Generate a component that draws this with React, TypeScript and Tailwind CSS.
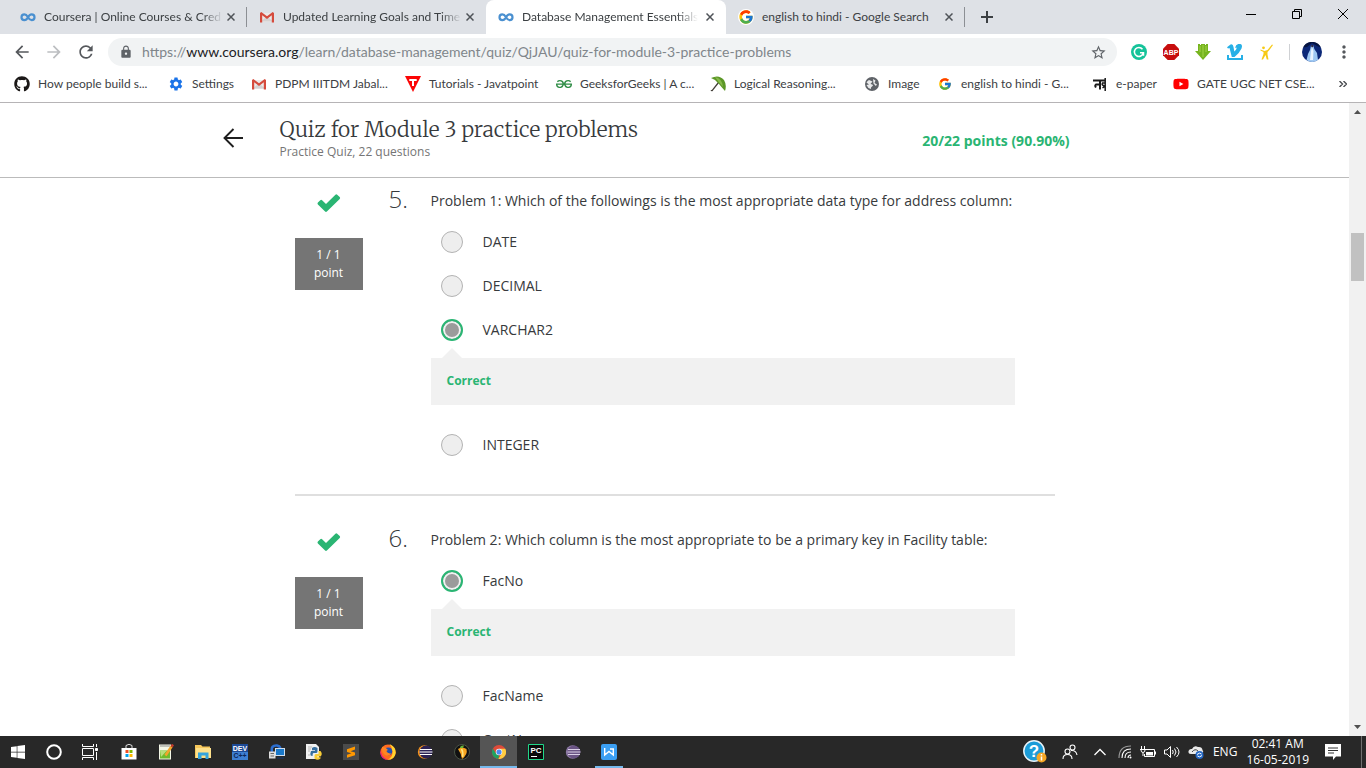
import { useState, type ReactNode } from "react";
import { FaGithub, FaWindows, FaYoutube } from "react-icons/fa";
import { FcGoogle } from "react-icons/fc";
import {
  MdArrowBack,
  MdArrowForward,
  MdLock,
  MdMoreVert,
  MdRefresh,
  MdSettings,
  MdStarBorder,
} from "react-icons/md";
import { SiGeeksforgeeks } from "react-icons/si";

/* ---------- Site icons ---------- */

function CourseraIcon() {
  return (
    <svg viewBox="0 0 16 16" className="size-4">
      <path
        d="M8 8.300C6.800 6.300 5.800 5.400 4.400 5.400a2.900 2.900 0 0 0 0 5.800C6.500 11.200 7.400 9.500 8 8.300S9.500 5.400 11.600 5.400a2.900 2.900 0 0 1 0 5.800C10.200 11.200 9.200 10.300 8 8.300"
        fill="none"
        stroke="#4a90d0"
        strokeWidth="2.200"
      />
    </svg>
  );
}

function GmailIcon() {
  return (
    <svg viewBox="0 0 16 16" className="size-4">
      <path d="M2 4h12v9H2z" fill="#eceaea" />
      <path d="M2 12.500 6.500 8.500h3L14 12.500z" fill="#d5d2d2" />
      <path d="M1 13.500V4l1.300-1L8 7.300 13.700 3 15 4v9.500h-2.200V6.300L8 10 3.200 6.300v7.200z" fill="#d54b3d" />
    </svg>
  );
}

function JavatpointIcon() {
  return (
    <svg viewBox="0 0 16 16" className="size-4">
      <path d="M0 0h16L8 16z" fill="#fb0505" />
      <path d="M4.300 3h7.400v2H9v5H7V5H4.300z" fill="#fff" />
    </svg>
  );
}

function UmbrellaIcon() {
  return (
    <svg viewBox="0 0 16 16" className="size-4">
      <path d="M8.500 6.500 2.500 14.200q-.8.900-1.500 0" fill="none" stroke="#44403a" strokeWidth="1.300" />
      <path d="M1 2Q9-1.800 14 4q3 5 1 11l-3.500-4L9 8 5 4z" fill="#5b9726" />
      <path d="M5 1q7 1 8 10l-4-4.500z" fill="#87b94a" />
    </svg>
  );
}

function GlobeIcon() {
  return (
    <svg viewBox="0 0 16 16" className="size-4">
      <circle cx="8" cy="8" r="7" fill="#5f6368" />
      <path
        d="M2.500 6.500Q3.500 4.500 5 4L8.500 5.500 6.500 8Q9 8 9 9.500L7 11.500V13Q3.500 12 2.500 9L5 8.500zM9 3l2.500 1.500L10.500 7l2.500 1.500-1.200 1.500L9.500 7.500z"
        fill="#e9eaeb"
      />
    </svg>
  );
}

function NaiIcon() {
  return (
    <svg viewBox="0 0 16 16" className="size-4">
      <path
        d="M1 4.500h12M8 4.500v9M7.500 8.500H4Q2.500 9.500 4 11.500"
        fill="none"
        stroke="#191919"
        strokeWidth="2"
      />
      <path d="M13.200 2v13M12.500 7H10.500q-1 2 1 2.500t-1 2.500" fill="none" stroke="#191919" strokeWidth="1.500" />
    </svg>
  );
}

/* ---------- Extension icons ---------- */

function GrammarlyIcon() {
  return (
    <svg viewBox="0 0 16 16" className="size-4">
      <circle cx="8" cy="8" r="8" fill="#15c39a" />
      <path d="M11.500 5.200A4.500 4.500 0 1 0 12.300 9M9 8.800h3.500v3" fill="none" stroke="#fff" strokeWidth="1.500" />
    </svg>
  );
}

function AdblockIcon() {
  return (
    <svg viewBox="0 0 16 16" className="size-4">
      <path d="M4.700 0h6.600L16 4.700v6.600L11.300 16H4.700L0 11.300V4.700z" fill="#c70d0d" />
      <text x="8" y="10.500" textAnchor="middle" fontSize="7" fontWeight="700" fill="#fff" fontFamily="Liberation Sans, sans-serif">
        ABP
      </text>
    </svg>
  );
}

function DownloadIcon() {
  return (
    <svg viewBox="0 0 16 16" className="size-4">
      <path d="M3 0h2v1h1V0h4v1h1V0h2v7h3l-8 9-8-9h3z" fill="#76b41f" />
      <path d="M5 2v6M8 1v12M11 2v6" stroke="#a1d447" strokeWidth="1" />
    </svg>
  );
}

function VimeoIcon() {
  return (
    <svg viewBox="0 0 16 16" className="size-4">
      <path d="M0 11h2v3h12v-3h2v5H0z" fill="#27b0e6" />
      <path d="M0 3.200 3.500.5Q6-.5 6.500 3l.8 4.500Q10.500 4.500 9.200 3.500L8 4Q9-.5 13-.1q3 .4 1.500 4.500Q12.500 9 7.500 13H4.800L2.500 4 1 4.500z" fill="#27b0e6" />
    </svg>
  );
}

function ArcherIcon() {
  return (
    <svg viewBox="0 0 16 16" className="size-4">
      <circle cx="4.500" cy="3.800" r="1.400" fill="#f7ca15" />
      <path d="M1.500 5.500 5.500 7l3-1L13 .5 14 1 10 6.500 8.500 8v2.500l1 5H7.800L6.500 11l-2.500 4.500H2.500L4.500 10V8L1.500 6.500z" fill="#f7ca15" />
    </svg>
  );
}

function Avatar() {
  return (
    <svg viewBox="0 0 20 20" className="size-5">
      <circle cx="10" cy="10" r="10" fill="#0c2878" />
      <path d="M1 5.500A10 10 0 0 1 19 5.500L15 4 10 1 5 5z" fill="#061440" />
      <path d="M9 3.500h2.500l.8 3.500 2.700 4 1 7Q10 22 4.500 18L6 12l2-4z" fill="#9dc7f2" />
      <path d="M10 5l1.500 4-.5 9H8l1-9z" fill="#e9f4ff" />
      <circle cx="10.300" cy="4" r="1.200" fill="#2c2743" />
    </svg>
  );
}

/* ---------- Browser chrome ---------- */

type TabInfo = { title: string; icon: ReactNode; active?: boolean; separator?: boolean; fades?: boolean };

const tabs: TabInfo[] = [
  { title: "Coursera | Online Courses & Cred", icon: <CourseraIcon />, separator: true, fades: true },
  { title: "Updated Learning Goals and Time", icon: <GmailIcon />, fades: true },
  { title: "Database Management Essentials", icon: <CourseraIcon />, active: true, fades: true },
  { title: "english to hindi - Google Search", icon: <FcGoogle className="size-4 rounded-full bg-white" />, separator: true },
];

function CloseGlyph() {
  return (
    <svg viewBox="0 0 8 8" className="size-2">
      <path d="M.5.500l7 7M7.500.500l-7 7" stroke="#4f5358" strokeWidth="1.500" />
    </svg>
  );
}

function Tab({ title, icon, active, separator, fades }: TabInfo) {
  return (
    <div className={active ? "flex h-[34px] w-60 items-center rounded-t-lg bg-white px-3" : "flex h-[34px] w-[239px] items-center pl-3"}>
      {icon}
      <span
        className={
          "ml-2 min-w-0 flex-1 overflow-hidden text-[12px] whitespace-nowrap text-[#3c4043] " +
          (fades ? "[mask-image:linear-gradient(to_right,#000_88%,transparent)]" : "")
        }
      >
        {title}
      </span>
      <button aria-label={`Close ${title}`} className={active ? "ml-2" : "mr-[11px] ml-1"}>
        <CloseGlyph />
      </button>
      {!active && <span className={separator ? "h-5 w-px bg-[#8c8f94]" : "h-5 w-px"} />}
    </div>
  );
}

function TabStrip() {
  return (
    <div className="flex h-[34px] shrink-0 items-center bg-[#dee1e6] pl-2">
      {tabs.map((tab) => (
        <Tab key={tab.title} {...tab} />
      ))}
      <button aria-label="New tab" className="ml-4">
        <svg viewBox="0 0 12 12" className="size-3">
          <path d="M6 0v12M0 6h12" stroke="#3c4043" strokeWidth="2" />
        </svg>
      </button>
      <div className="ml-auto flex items-center gap-9 self-start pt-2 pr-[18px]">
        <button aria-label="Minimize">
          <svg viewBox="0 0 10 12" className="h-3 w-[10px]">
            <path d="M0 6.500h10" stroke="#000" />
          </svg>
        </button>
        <button aria-label="Restore">
          <svg viewBox="0 0 10 12" className="h-3 w-[10px]">
            <path d="M.5 3.500h7v7h-7zM2.500 3V1.500h7v7H8" fill="none" stroke="#000" />
          </svg>
        </button>
        <button aria-label="Close window">
          <svg viewBox="0 0 10 12" className="h-3 w-[10px]">
            <path d="M0 1l10 10M10 1 0 11" stroke="#000" />
          </svg>
        </button>
      </div>
    </div>
  );
}

function AddressBar() {
  return (
    <div className="flex h-9 shrink-0 items-center bg-white pr-3 pl-3">
      <button aria-label="Back">
        <MdArrowBack className="size-5 text-[#55585c]" />
      </button>
      <button aria-label="Forward" className="ml-3">
        <MdArrowForward className="size-5 text-[#bcbec1]" />
      </button>
      <button aria-label="Reload" className="ml-3">
        <MdRefresh className="size-5 text-[#55585c]" />
      </button>
      <div className="ml-3 flex h-7 flex-1 items-center rounded-full bg-[#f1f3f4] pr-[10px] pl-[11px]">
        <MdLock className="size-[14px] text-[#5f6368]" />
        <span className="ml-[9px] flex-1 text-[14px] leading-5 whitespace-nowrap text-[#80868b]">
          https://<span className="text-[#202124]">www.coursera.org</span>
          /learn/database-management/quiz/QjJAU/quiz-for-module-3-practice-problems
        </span>
        <button aria-label="Bookmark this page">
          <MdStarBorder className="size-[17px] text-[#5f6368]" />
        </button>
      </div>
      <div className="ml-[14px] flex items-center gap-4">
        <button aria-label="Grammarly"><GrammarlyIcon /></button>
        <button aria-label="Adblock Plus"><AdblockIcon /></button>
        <button aria-label="Downloader"><DownloadIcon /></button>
        <button aria-label="Video downloader"><VimeoIcon /></button>
        <button aria-label="Archer"><ArcherIcon /></button>
      </div>
      <span className="mr-3 ml-[14px] h-4 w-px bg-[#cfd1d4]" />
      <button aria-label="Profile"><Avatar /></button>
      <button aria-label="Menu" className="ml-3">
        <MdMoreVert className="size-5 text-[#55585c]" />
      </button>
    </div>
  );
}

const bookmarks: { label: string; icon: ReactNode }[] = [
  { label: "How people build s...", icon: <FaGithub className="size-4 text-[#1b1817]" /> },
  { label: "Settings", icon: <MdSettings className="size-4 text-[#1a73e8]" /> },
  { label: "PDPM IIITDM Jabal...", icon: <GmailIcon /> },
  { label: "Tutorials - Javatpoint", icon: <JavatpointIcon /> },
  { label: "GeeksforGeeks | A c...", icon: <SiGeeksforgeeks className="size-4 text-[#2f8d46]" /> },
  { label: "Logical Reasoning...", icon: <UmbrellaIcon /> },
  { label: "Image", icon: <GlobeIcon /> },
  { label: "english to hindi - G...", icon: <FcGoogle className="size-[14px]" /> },
  { label: "e-paper", icon: <NaiIcon /> },
  { label: "GATE UGC NET CSE...", icon: <FaYoutube className="size-4 text-[#f00]" /> },
];

function BookmarksBar() {
  return (
    <nav className="flex h-[33px] shrink-0 items-center border-b border-[#b6b4b6] bg-white pb-1 pl-[14px]">
      <div className="grid grid-cols-[154px_83px_154px_151px_154px_154px_73px_155px_81px_150px]">
        {bookmarks.map(({ label, icon }) => (
          <a key={label} href="#" className="flex items-center gap-2 text-[12px] whitespace-nowrap text-[#3c4043]">
            <span className="flex w-4 shrink-0 justify-center">{icon}</span>
            {label}
          </a>
        ))}
      </div>
      <button aria-label="More bookmarks" className="mr-[19px] ml-auto">
        <svg viewBox="0 0 8 6" className="h-[6px] w-2">
          <path d="M.5 0l3 3-3 3M4.500 0l3 3-3 3" fill="none" stroke="#4a4d51" strokeWidth="1.400" />
        </svg>
      </button>
    </nav>
  );
}

/* ---------- Quiz page ---------- */

function QuizHeader() {
  return (
    <header className="h-[75px] shrink-0 border-b border-[#bbb] bg-white">
      <div className="mx-auto flex h-full w-full max-w-[904px] items-center pb-1">
        <a href="#" aria-label="Back to course">
          <svg viewBox="0 0 20 20" className="size-5">
            <path d="M10.500 1 1.500 10l9 9M1.500 10H20" fill="none" stroke="#1f1f1f" strokeWidth="1.900" />
          </svg>
        </a>
        <div className="ml-[37px] flex-1">
          <h1 className="font-['Merriweather','Liberation_Serif',serif] text-[21px] leading-7 font-light text-[#373a3c]">
            Quiz for Module 3 practice problems
          </h1>
          <p className="text-[12px] leading-4 text-[#757575]">Practice Quiz, 22 questions</p>
        </div>
        <p className="mt-[6px] mr-[57px] text-[14px] leading-5 font-bold text-[#2ab573]">20/22 points (90.90%)</p>
      </div>
    </header>
  );
}

type Question = { number: number; text: string; options: string[]; answer: string };

const questions: Question[] = [
  {
    number: 5,
    text: "Problem 1: Which of the followings is the most appropriate data type for address column:",
    options: ["DATE", "DECIMAL", "VARCHAR2", "INTEGER"],
    answer: "VARCHAR2",
  },
  {
    number: 6,
    text: "Problem 2: Which column is the most appropriate to be a primary key in Facility table:",
    options: ["FacNo", "FacName", "CustNo"],
    answer: "FacNo",
  },
];

function CheckMark() {
  return (
    <svg viewBox="0 0 24 24" className="size-6">
      <path
        d="M.9 11.600 3.300 9.200q.9-.9 1.800 0L9 13 18.400 3.700q.9-.9 1.800 0l2.500 2.400q.9.900 0 1.800L9.900 20.600q-.9.900-1.800 0L.9 13.400q-.9-.9 0-1.800z"
        fill="#2ab573"
      />
    </svg>
  );
}

function Feedback() {
  return (
    <div className="mt-[6px] mb-[18px] flex h-[47px] flex-col">
      <svg viewBox="0 0 20 10" className="-mt-[10px] ml-[11px] h-[10px] w-5 shrink-0">
        <path d="M0 10 10 0l10 10z" fill="#f1f1f1" />
      </svg>
      <p className="h-[47px] shrink-0 bg-[#f1f1f1] px-4 pt-[14px] text-[12px] leading-[18px] font-bold text-[#2ab573]">
        Correct
      </p>
    </div>
  );
}

function QuestionItem({ number, text, options, answer }: Question) {
  const [selected, setSelected] = useState(answer);
  return (
    <article className="mx-auto flex w-full max-w-[760px] border-b-2 border-[#dfdfdf] pb-[27px] not-first:pt-[34px]">
      <div className="flex w-[68px] flex-col items-center">
        <CheckMark />
        <p className="mt-[23px] flex h-[52px] w-full items-center justify-center bg-[#757575] text-center text-[12px] leading-[18px] text-white">
          1 / 1
          <br />
          point
        </p>
      </div>
      <span className="ml-[26px] w-[42px] text-[24px] leading-4 font-light text-[#373a3c]">{number}.</span>
      <fieldset className="w-[584px]">
        <legend className="mb-[9px] text-[14px] leading-5 whitespace-nowrap text-[#373a3c]">{text}</legend>
        {options.map((option) => (
          <div key={option}>
            <label className="flex h-11 items-center gap-5 pl-[10px] text-[14px] leading-5 text-[#373a3c]">
              <input
                type="radio"
                name={`question-${number}`}
                checked={selected === option}
                onChange={() => setSelected(option)}
                className="size-[22px] appearance-none rounded-full border border-[#b3b3b3] bg-[#eee] checked:border-2 checked:border-[#2ab573] checked:bg-[#9b9b9b] checked:shadow-[inset_0_0_0_2px_#f1f1f1]"
              />
              {option}
            </label>
            {option === answer && <Feedback />}
          </div>
        ))}
      </fieldset>
    </article>
  );
}

function ScrollRail() {
  return (
    <div className="flex w-[17px] shrink-0 flex-col items-center bg-[#f1f1f1] py-[7px]">
      <svg viewBox="0 0 7 4" className="h-1 w-[7px] shrink-0">
        <path d="M0 4 3.500 0 7 4z" fill="#505050" />
      </svg>
      <div className="mt-[119px] h-12 w-[13px] shrink-0 bg-[#c1c1c1]" />
      <svg viewBox="0 0 7 4" className="mt-auto h-1 w-[7px] shrink-0">
        <path d="M0 0 3.500 4 7 0z" fill="#505050" />
      </svg>
    </div>
  );
}

/* ---------- Taskbar ---------- */

function StoreIcon() {
  return (
    <svg viewBox="0 0 16 16" className="size-4">
      <path d="M5 4V1.500Q8-1 11 1.500V4" fill="none" stroke="#ddd" />
      <path d="M.5 4h15v11.500H.5z" fill="#fff" />
      <path d="M4.500 6H7.500v3h-3z" fill="#f25022" />
      <path d="M8.500 6h3v3h-3z" fill="#7fba00" />
      <path d="M4.500 10h3v3h-3z" fill="#00a4ef" />
      <path d="M8.500 10h3v3h-3z" fill="#ffb900" />
    </svg>
  );
}

function NotepadIcon() {
  return (
    <svg viewBox="0 0 16 16" className="size-4">
      <path d="M1 .5h12V15.500H1z" fill="#f4f7e8" />
      <path d="M2 6.500h10V14.500H2z" fill="#6fba2c" />
      <path d="M2 6.500h7L3 13z" fill="#b8de7e" />
      <path d="M3 .5v2.500M5 .5v2.500M7 .5v2.500M9 .5v2.500M11 .5v2.500" stroke="#8b8b8b" />
      <path d="M13.500 2.500 7.500 11.500" stroke="#f3a52d" strokeWidth="2.600" />
      <path d="m15 .5-1.500 2.200" stroke="#c33c2c" strokeWidth="2.600" />
    </svg>
  );
}

function FolderIcon() {
  return (
    <svg viewBox="0 0 16 16" className="size-4">
      <path d="M0 1h6l1.500 1.500H15V14H0z" fill="#f6c75b" />
      <path d="M1 4h15v10H1z" fill="#fde08b" />
      <path d="M3 15V8.500h10.500V15H10.500v-3.500h-4V15z" fill="#35a4dd" />
    </svg>
  );
}

function DevCppIcon() {
  return (
    <svg viewBox="0 0 16 16" className="size-4">
      <path d="M0 0h16v16H0z" fill="#1d4a96" />
      <path d="M0 8h16v8H0z" fill="#3d7fd2" />
      <text x="8" y="7" textAnchor="middle" fontSize="7" fontWeight="700" fill="#fff" fontFamily="Liberation Sans, sans-serif">DEV</text>
      <text x="8" y="14" textAnchor="middle" fontSize="7" fontWeight="700" fill="#0e2757" fontFamily="Liberation Sans, sans-serif">C++</text>
    </svg>
  );
}

function RemoteIcon() {
  return (
    <svg viewBox="0 0 16 16" className="size-4">
      <path d="M3 8Q1.500 1 8 1.500Q10.500 2 11.500 4" fill="none" stroke="#2c6fd1" strokeWidth="2.500" />
      <path d="M6 4h10v8H6z" fill="#cfdded" />
      <path d="M7 5h8v6H7z" fill="#1978c9" />
      <path d="M8 13h7v2H8z" fill="#1c2f4b" />
      <path d="M0 7.500h6.500v7H0z" fill="#dedede" />
      <path d="M1.500 9.500h3.500M1.500 12h3.500" stroke="#676767" />
    </svg>
  );
}

function PythonIcon() {
  return (
    <svg viewBox="0 0 16 16" className="size-4">
      <path d="M0 0h10l3 3v12H0z" fill="#f0f0f0" />
      <path d="M2 3h4M2 5h3M2 7h2M2 11h3" stroke="#b5b5b5" />
      <path d="M6 5.500V4Q8.500 2 11.500 4V7.500Q11.500 9 10 9H7.500Q6.500 9.200 6.500 12H5.500Q3.500 9.500 5 7H9V6.200H6z" fill="#356e9f" />
      <path d="M12.500 7H14.500Q17 10 14.500 12.500H11V13.300H14.500V14.500Q11.500 17 8.500 14.500V11.500Q8.500 10 10 10H12.500z" fill="#f8cd37" />
    </svg>
  );
}

function SublimeIcon() {
  return (
    <svg viewBox="0 0 16 16" className="size-4">
      <path d="M0 0h16v16H0z" fill="#4b4b4b" />
      <path d="M4 5.200 12 2.500v3L7.500 7.200 12 8.500v2.800L4 13.700v-3l4.500-1.500L4 7.900z" fill="#ff9800" />
    </svg>
  );
}

function FirefoxIcon() {
  return (
    <svg viewBox="0 0 16 16" className="size-4">
      <circle cx="8" cy="8.200" r="7.700" fill="#ff6a1f" />
      <path d="M9.500 0Q16 3 15.700 9 14.500 15.500 8 15.800 13.500 12 12.500 7 12 3 9.500 0z" fill="#ffd42e" />
      <path d="M.8 4.500Q0 13 8 15.900 1 15.500.3 9z" fill="#e31587" />
      <circle cx="8.300" cy="7.300" r="3.900" fill="#214fb0" />
      <path d="M2 3Q5.500 2.500 8 6L6.300 7q1.500 3.200 5.200 2.200Q9 13 5 11 1.500 8.500 2 3z" fill="#ff8522" />
    </svg>
  );
}

function EclipseIcon({ body, line, edge }: { body: string; line: string; edge: string }) {
  return (
    <svg viewBox="0 0 16 16" className="size-4">
      <circle cx="7.500" cy="8" r="6.700" fill={edge} />
      <circle cx="8.900" cy="8" r="6.500" fill={body} />
      <path d="M3 5.500h12M2.500 8h13M3 10.500h12" stroke={line} strokeWidth="1.200" />
    </svg>
  );
}

function FruityIcon() {
  return (
    <svg viewBox="0 0 16 16" className="size-4">
      <circle cx="8" cy="8" r="7.500" fill="#111" stroke="#4b5547" />
      <path d="M4 5q4-3 8.500 0Q14 10.500 8 15 7.500 10 4 5z" fill="#f7a51f" />
      <path d="M7.500 5q2 3 1 8" fill="none" stroke="#ffe682" strokeWidth="1.500" />
      <path d="M6 4Q6 1 10 1.500L9 4z" fill="#69b339" />
    </svg>
  );
}

function ChromeIcon() {
  return (
    <svg viewBox="0 0 16 16" className="size-[14px]">
      <circle cx="8" cy="8" r="8" fill="#de4b3b" />
      <path d="M1.070 4 4.700 10 8 11.700 7.300 16A8 8 0 0 1 1.070 4z" fill="#1da362" />
      <path d="M8 4.300h7.100A8 8 0 0 1 7.300 16L11.200 9.700z" fill="#ffcd41" />
      <circle cx="8" cy="8" r="3.700" fill="#f3f3f3" />
      <circle cx="8" cy="8" r="2.900" fill="#4a8af4" />
    </svg>
  );
}

function PycharmIcon() {
  return (
    <svg viewBox="0 0 16 16" className="size-4">
      <path d="M.5.500h15v15H.5z" fill="#0a0a0a" stroke="#21d789" />
      <text x="8" y="9" textAnchor="middle" fontSize="8" fontWeight="700" fill="#fff" fontFamily="Liberation Sans, sans-serif">PC</text>
      <path d="M3 12.500h6" stroke="#fff" />
    </svg>
  );
}

function WpsIcon() {
  return (
    <svg viewBox="0 0 16 16" className="size-4">
      <rect width="16" height="16" rx="2" fill="#3b9ff3" />
      <path d="M3.700 4v7L8 7.500l4.300 3.500V5H9" fill="none" stroke="#fff" strokeWidth="1.400" />
    </svg>
  );
}

const apps: { name: string; icon: ReactNode }[] = [
  { name: "Store", icon: <StoreIcon /> },
  { name: "Notepad++", icon: <NotepadIcon /> },
  { name: "File Explorer", icon: <FolderIcon /> },
  { name: "Dev-C++", icon: <DevCppIcon /> },
  { name: "Remote Desktop", icon: <RemoteIcon /> },
  { name: "Python", icon: <PythonIcon /> },
  { name: "Sublime Text", icon: <SublimeIcon /> },
  { name: "Firefox", icon: <FirefoxIcon /> },
  { name: "Eclipse", icon: <EclipseIcon body="#2c2255" line="#fff" edge="#f7941e" /> },
  { name: "Media player", icon: <FruityIcon /> },
  { name: "Chrome", icon: <ChromeIcon /> },
  { name: "PyCharm", icon: <PycharmIcon /> },
  { name: "Eclipse Java", icon: <EclipseIcon body="#6a5484" line="#d9cfe5" edge="#8d79a5" /> },
  { name: "WPS Writer", icon: <WpsIcon /> },
];

function appClass(name: string) {
  if (name === "Chrome") return "flex h-8 w-[37px] items-center justify-center border-b-2 border-[#76b9ed] bg-[#555] pt-[2px]";
  if (name === "WPS Writer") return "mx-1 flex h-8 w-7 items-center justify-center border-b-2 border-[#76b9ed] pt-[2px]";
  return "flex h-8 w-[37px] items-center justify-center";
}

function SystemTray() {
  return (
    <div className="ml-auto flex h-full items-center text-white">
      <button aria-label="Help">
        <svg viewBox="0 0 24 24" className="size-6">
          <circle cx="11" cy="11" r="10.200" fill="#1b9cd8" stroke="#e8f4fa" strokeWidth="1.500" />
          <text x="11" y="17" textAnchor="middle" fontSize="17" fontWeight="700" fill="#fff" fontFamily="Liberation Sans, sans-serif">?</text>
          <circle cx="18.500" cy="17.500" r="5" fill="#f5a623" />
          <path d="M18.500 16.500v4M18.500 14v1.500" stroke="#fff" strokeWidth="1.500" />
        </svg>
      </button>
      <button aria-label="People" className="ml-[15px]">
        <svg viewBox="0 0 16 16" className="size-4" fill="none" stroke="#fff" strokeWidth="1.100">
          <circle cx="5.500" cy="7.500" r="2.500" />
          <path d="M1 15q0-4.500 4.500-4.500T10 15" />
          <circle cx="10.500" cy="3.500" r="2.500" />
          <path d="M9 6.500q5-.5 6 4.500" />
        </svg>
      </button>
      <button aria-label="Show hidden icons" className="ml-4">
        <svg viewBox="0 0 12 8" className="h-2 w-3">
          <path d="M.5 7 6 1.500 11.500 7" fill="none" stroke="#fff" strokeWidth="1.300" />
        </svg>
      </button>
      <button aria-label="Network" className="ml-3">
        <svg viewBox="0 0 14 14" className="size-[14px]" fill="none" strokeWidth="1.100">
          <path d="M1 13Q1 1 13 1" stroke="#999" />
          <path d="M4 13q0-9 9-9M7 13q0-6 6-6M10 13q0-3 3-3" stroke="#fff" />
          <circle cx="12.500" cy="12.500" r="1" fill="#fff" />
        </svg>
      </button>
      <button aria-label="Battery" className="ml-2">
        <svg viewBox="0 0 16 12" className="h-3 w-4">
          <path d="M1.500 0v3M4.500 0v3M0 3.500h6M1 4q0 2.500 2 2.500T5 4M3 6.500V10" fill="none" stroke="#fff" />
          <path d="M6 3.500h8.500v7h-10V8" fill="none" stroke="#fff" />
          <path d="M6 6h7v3.500H6zM15 5.500h1v3h-1z" fill="#fff" />
        </svg>
      </button>
      <button aria-label="Volume" className="ml-2">
        <svg viewBox="0 0 16 14" className="h-[14px] w-4" fill="none" stroke="#fff">
          <path d="M.5 5v4h2.500l3.500 3.500V1.500L3 5zM8.500 5q1.500 2 0 4M10.500 3.500q3 3.500 0 7M12.500 2q5 5 0 10" />
        </svg>
      </button>
      <button aria-label="Cloud sync" className="ml-2">
        <svg viewBox="0 0 16 14" className="h-[14px] w-4">
          <path d="M3 9Q0 9 .5 6 1.500 3.500 4 4q2-4 6-2 4-.5 4.500 3 1.500 1.500 0 4z" fill="#eaeaea" />
          <path d="M4 7q3-4 6-1" fill="none" stroke="#444" />
          <circle cx="11.500" cy="10" r="4" fill="#2467c4" />
          <path d="M9 9.500Q11.500 7 13.500 9M14 10.500Q11.500 13 9.500 11" fill="none" stroke="#fff" />
        </svg>
      </button>
      <span className="ml-[9px] text-[12px]">ENG</span>
      <time className="ml-[9px] text-center text-[12px] leading-4 whitespace-nowrap">
        02:41 AM
        <br />
        16-05-2019
      </time>
      <button aria-label="Notifications" className="ml-4">
        <svg viewBox="0 0 16 16" className="size-4">
          <path d="M0 0h16v12.500h-5L8 16v-3.500H0z" fill="#fff" />
          <path d="M3 4h10M3 6.500h10M3 9h6" stroke="#333" />
        </svg>
      </button>
      <span className="mr-1 ml-5 h-full w-px bg-[#6f6f6f]" />
    </div>
  );
}

function Taskbar() {
  return (
    <footer className="flex h-8 shrink-0 items-center bg-[#282828] pl-[10px]">
      <button aria-label="Start">
        <FaWindows className="size-4 text-white" />
      </button>
      <button aria-label="Cortana" className="ml-5">
        <svg viewBox="0 0 16 16" className="size-4">
          <circle cx="8" cy="8" r="6.800" fill="none" stroke="#fff" strokeWidth="2" />
        </svg>
      </button>
      <button aria-label="Task view" className="mr-3 ml-5">
        <svg viewBox="0 0 16 16" className="size-4" fill="none" stroke="#fff">
          <path d="M.5 0v2.500h11V0M.5 4.500h11v7H.5zM.5 16v-2.500h11V16M14.500 0v3M14.500 8v8" />
          <path d="M13.500 4.500h2v2h-2z" fill="#fff" />
        </svg>
      </button>
      {apps.map(({ name, icon }) => (
        <button key={name} aria-label={name} className={appClass(name)}>
          {icon}
        </button>
      ))}
      <SystemTray />
    </footer>
  );
}

export default function App() {
  return (
    <div className="flex h-screen flex-col overflow-hidden bg-white font-['Open_Sans',sans-serif]">
      <div className="font-['Segoe_UI','Lato',sans-serif]">
        <TabStrip />
        <AddressBar />
        <BookmarksBar />
      </div>
      <div className="flex min-h-0 flex-1">
        <div className="flex min-w-0 flex-1 flex-col">
          <QuizHeader />
          <main className="min-h-0 flex-1 overflow-hidden pt-[13px]">
            {questions.map((question) => (
              <QuestionItem key={question.number} {...question} />
            ))}
          </main>
        </div>
        <ScrollRail />
      </div>
      <Taskbar />
    </div>
  );
}
